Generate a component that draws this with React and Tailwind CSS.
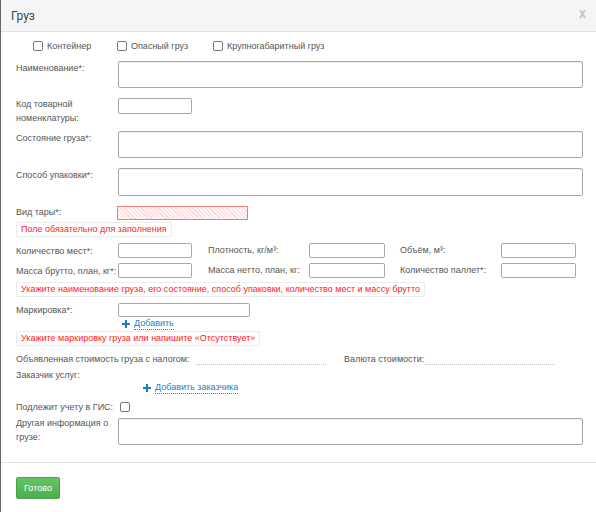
import React from "react";

const F = { fontFamily: '"Liberation Sans", Arial, sans-serif' };

function Label({ children, className = "" }) {
  return (
    <div className={`w-[102px] shrink-0 text-[9px] leading-[12px] text-[#555] ${className}`}>{children}</div>
  );
}

function Box({ className = "" }) {
  return <div className={`border border-[#a8a8a8] rounded-[2px] bg-white ${className}`} />;
}

function Big({ className = "" }) {
  return <div className={`w-[465px] h-[27px] border border-[#a8a8a8] rounded-[2px] bg-white shadow-[inset_0_1px_1px_rgba(0,0,0,0.06)] ${className}`} />;
}

function Err({ children, className = "" }) {
  return (
    <div className={`ml-[15px] h-[15px] px-[4px] border border-[#ececec] text-[9px] leading-[13px] text-[#ff1a1a] w-fit ${className}`}>
      {children}
    </div>
  );
}

function Check({ className = "" }) {
  return <span className={`inline-block shrink-0 w-[10px] h-[10px] border border-[#777] rounded-[2px] bg-white ${className}`} />;
}

function Plus() {
  return (
    <svg width="8" height="8" viewBox="0 0 8 8" className="mr-[4px]">
      <rect x="3" y="0" width="2" height="8" fill="#1a7fc8" />
      <rect x="0" y="3" width="8" height="2" fill="#1a7fc8" />
    </svg>
  );
}

function Link({ children }) {
  return (
    <span className="text-[9px] leading-[11px] text-[#1a7fc8] border-b border-dotted border-[#1a7fc8]">{children}</span>
  );
}

const T = "text-[9px] text-[#555]";

export default function App() {
  return (
    <div style={F} className="w-[596px] h-[512px] bg-white border-l border-[#666] overflow-hidden relative">
      <div className="h-[32px] bg-[#f5f5f5] border-b border-[#e2e2e2] flex items-center justify-between pl-[10px] pr-[10px]">
        <span style={{ fontFamily: "Roboto, sans-serif" }} className="text-[12px] text-[#444]">Груз</span>
        <span style={{ fontFamily: "Roboto, sans-serif" }} className="text-[11px] font-bold text-[#c4c4c4]">X</span>
      </div>

      <div className="flex items-center h-[12px] mt-[8px] pl-[32px] text-[9px] leading-[12px] text-[#555]">
        <div className="flex items-center w-[84px]">
          <Check />
          <span className="ml-[4px]">Контейнер</span>
        </div>
        <div className="flex items-center w-[96px]">
          <Check />
          <span className="ml-[4px]">Опасный груз</span>
        </div>
        <div className="flex items-center">
          <Check />
          <span className="ml-[4px]">Крупногабаритный груз</span>
        </div>
      </div>

      <div className="flex pl-[15px] mt-[9px]">
        <Label className="pt-[1px]">Наименование*:</Label>
        <Big />
      </div>

      <div className="flex pl-[15px] mt-[10px]">
        <Label className="leading-[14px] -mt-[1px]">Код товарной номенклатуры:</Label>
        <Box className="w-[74px] h-[16px]" />
      </div>

      <div className="flex pl-[15px] mt-[6px]">
        <Label className="pt-[1px]">Состояние груза*:</Label>
        <Big />
      </div>

      <div className="flex pl-[15px] mt-[10px]">
        <Label className="pt-[1px]">Способ упаковки*:</Label>
        <Big className="h-[28px]" />
      </div>

      <div className="flex pl-[15px] mt-[10px]">
        <Label>Вид тары*:</Label>
        <div className="-ml-[1px] w-[131px] h-[14px] border border-[#f07c7c] bg-[repeating-linear-gradient(45deg,#fbdada_0px,#fbdada_1px,#fff3f3_1px,#fff3f3_3px)]" />
      </div>

      <Err className="mt-[2px]">Поле обязательно для заполнения</Err>

      <div className="flex items-center pl-[15px] mt-[6px] h-[15px]">
        <Label>Количество мест*:</Label>
        <Box className="w-[74px] h-[15px]" />
        <span className={`ml-[16px] w-[101px] ${T}`}>Плотность, кг/м³:</span>
        <Box className="w-[76px] h-[15px]" />
        <span className={`ml-[15px] w-[101px] ${T}`}>Объём, м³:</span>
        <Box className="w-[75px] h-[15px]" />
      </div>

      <div className="flex items-center pl-[15px] mt-[5px] h-[15px]">
        <Label>Масса брутто, план, кг*:</Label>
        <Box className="w-[74px] h-[15px]" />
        <span className={`ml-[16px] w-[101px] ${T}`}>Масса нетто, план, кг:</span>
        <Box className="w-[76px] h-[15px]" />
        <span className={`ml-[15px] w-[101px] ${T}`}>Количество паллет*:</span>
        <Box className="w-[75px] h-[15px]" />
      </div>

      <Err className="mt-[4px]">Укажите наименование груза, его состояние, способ упаковки, количество мест и массу брутто</Err>

      <div className="flex pl-[15px] mt-[6px]">
        <Label className="pt-[1px]">Маркировка*:</Label>
        <Box className="w-[132px] h-[14px]" />
      </div>

      <div className="flex items-center pl-[121px] h-[14px]">
        <Plus />
        <Link>Добавить</Link>
      </div>

      <Err>Укажите маркировку груза или напишите «Отсутствует»</Err>

      <div className={`flex items-center pl-[15px] mt-[7px] h-[12px] leading-[12px] ${T}`}>
        <span className="w-[180px] whitespace-nowrap">Объявленная стоимость груза с налогом:</span>
        <span className="w-[130px] h-[1px] mt-[11px] border-t border-dotted border-[#c8c8c8]" />
        <span className="ml-[18px] w-[81px] whitespace-nowrap">Валюта стоимости:</span>
        <span className="w-[130px] h-[1px] mt-[11px] border-t border-dotted border-[#c8c8c8]" />
      </div>

      <div className={`pl-[15px] mt-[4px] h-[12px] leading-[12px] ${T}`}>Заказчик услуг:</div>

      <div className="flex items-center pl-[142px] h-[14px]">
        <Plus />
        <Link>Добавить заказчика</Link>
      </div>

      <div className="flex items-center pl-[15px] mt-[6px] h-[12px]">
        <span className={`leading-[12px] w-[104px] whitespace-nowrap ${T}`}>Подлежит учету в ГИС:</span>
        <Check />
      </div>

      <div className="flex pl-[15px] mt-[5px]">
        <Label className="leading-[14px] -mt-[2px]">Другая информация о грузе:</Label>
        <Big />
      </div>

      <div className="mt-[17px] border-t border-[#e2e2e2]" />

      <div className="pl-[15px] mt-[11px]">
        <button className="w-[44px] h-[22px] rounded-[2px] border border-[#4aa54a] bg-[linear-gradient(#62c462,#4cae4c)] text-white text-[9px] leading-[20px]">
          Готово
        </button>
      </div>
    </div>
  );
}
